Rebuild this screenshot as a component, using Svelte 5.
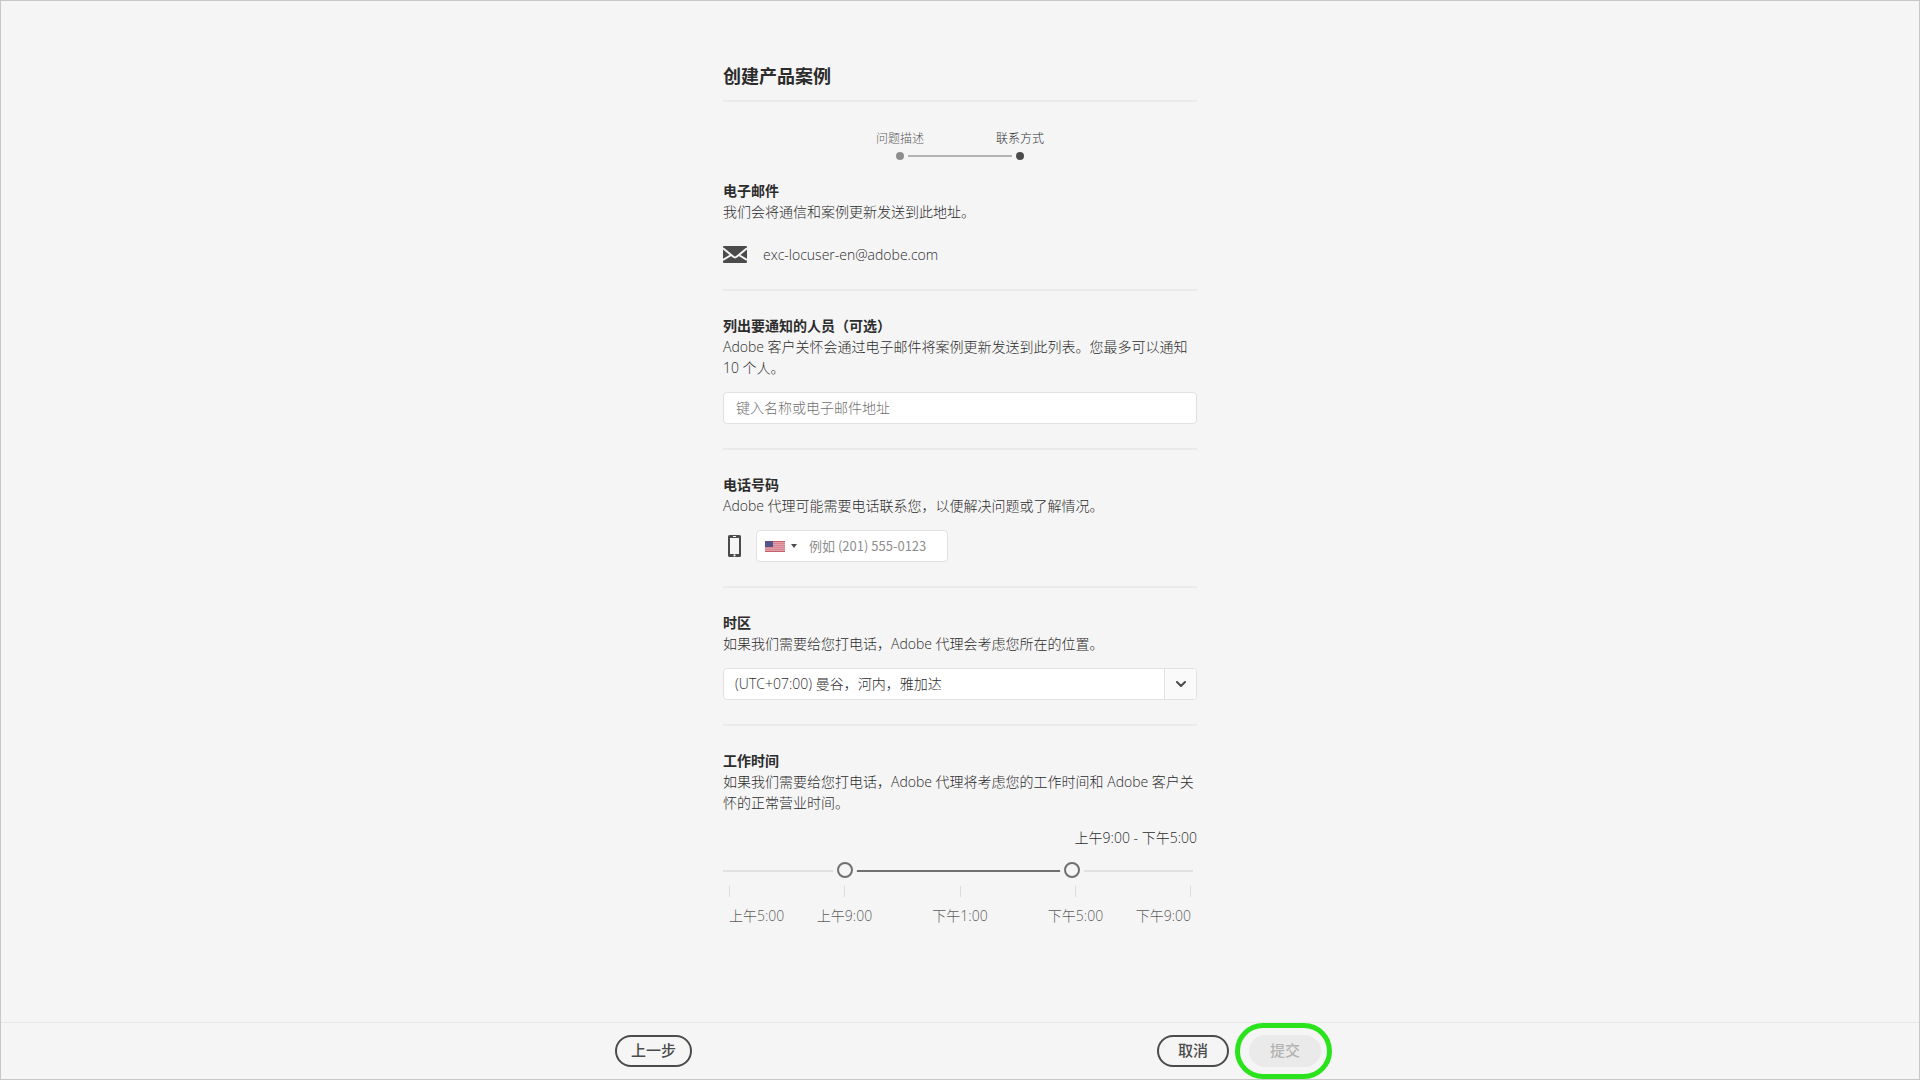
<script>
  const steps = [
    { label: '问题描述', active: false },
    { label: '联系方式', active: true },
  ];
  const hours = ['上午5:00', '上午9:00', '下午1:00', '下午5:00', '下午9:00'];
  const min = 5;
  const max = 21;
  let from = $state(9);
  let to = $state(17);
  let watchers = $state('');
  let phone = $state('');

  const pct = (v) => ((v - min) / (max - min)) * 100;
  const hour = (v) => (v < 12 ? `上午${v}:00` : `下午${v === 12 ? 12 : v - 12}:00`);
</script>

<div class="page">
  <main>
    <h1>创建产品案例</h1>

    <ol class="steps">
      {#each steps as step}
        <li class:active={step.active}>
          <span>{step.label}</span>
          <i class="dot"></i>
        </li>
      {/each}
    </ol>

    <section class="first">
      <h2>电子邮件</h2>
      <p>我们会将通信和案例更新发送到此地址。</p>
      <div class="email">
        <svg width="24" height="17" viewBox="0 0 24 17" aria-hidden="true">
          <rect width="24" height="17" rx="1" fill="#4b4b4b" />
          <path d="M0 2.200 10.400 10.800Q12 12 13.600 10.800L24 2.200M0 14 8.200 9M24 14 15.800 9" fill="none" stroke="#f5f5f5" stroke-width="2" />
        </svg>
        <span>exc-locuser-en@adobe.com</span>
      </div>
    </section>

    <section>
      <h2><label for="watchers">列出要通知的人员（可选）</label></h2>
      <p>Adobe 客户关怀会通过电子邮件将案例更新发送到此列表。您最多可以通知 10 个人。</p>
      <input id="watchers" class="field" type="text" placeholder="键入名称或电子邮件地址" bind:value={watchers} />
    </section>

    <section>
      <h2><label for="phone">电话号码</label></h2>
      <p>Adobe 代理可能需要电话联系您，以便解决问题或了解情况。</p>
      <div class="phone-row">
        <svg width="13" height="22" viewBox="0 0 13 22" aria-hidden="true">
          <path fill-rule="evenodd" fill="#4b4b4b" d="M1.500 0h10A1.500 1.500 0 0 1 13 1.500v19a1.500 1.500 0 0 1-1.500 1.500h-10A1.500 1.500 0 0 1 0 20.500v-19A1.500 1.500 0 0 1 1.500 0ZM2 3v16h9V3ZM5 1v1h3V1ZM6.500 19.300a1.100 1.100 0 1 0 0 2.200 1.100 1.100 0 0 0 0-2.200Z" />
        </svg>
        <div class="field phone">
          <button type="button" class="country" aria-label="美国">
            <svg width="20" height="11" viewBox="0 0 20 11" aria-hidden="true">
              <rect width="20" height="11" fill="#e3a0a8" />
              <path d="M0 .5h20M0 10.500h20" stroke="#c4606c" />
              <path d="M0 2.500h20M0 4.500h20M0 6.500h20M0 8.500h20" stroke="#d88490" />
              <rect width="8" height="6" fill="#55548a" />
            </svg>
            <svg width="6" height="4" viewBox="0 0 6 4" aria-hidden="true"><path d="M0 0h6L3 4Z" fill="#4b4b4b" /></svg>
          </button>
          <input id="phone" type="tel" placeholder="例如 (201) 555-0123" bind:value={phone} />
        </div>
      </div>
    </section>

    <section>
      <h2><label for="zone">时区</label></h2>
      <p>如果我们需要给您打电话，Adobe 代理会考虑您所在的位置。</p>
      <div class="field zone">
        <select id="zone">
          <option>(UTC+07:00) 曼谷，河内，雅加达</option>
        </select>
        <span class="chevron">
          <svg width="10" height="7" viewBox="0 0 10 7" aria-hidden="true"><path d="M1 1 5 5 9 1" fill="none" stroke="#4b4b4b" stroke-width="2" stroke-linecap="round" stroke-linejoin="round" /></svg>
        </span>
      </div>
    </section>

    <section class="last">
      <h2>工作时间</h2>
      <p>如果我们需要给您打电话，Adobe 代理将考虑您的工作时间和 Adobe 客户关怀的正常营业时间。</p>
      <output>{hour(from)} - {hour(to)}</output>
      <div class="slider" style:--from="{pct(from)}%" style:--to="{pct(to)}%">
        <input type="range" aria-label="开始时间" {min} {max} bind:value={from} />
        <input type="range" aria-label="结束时间" {min} {max} bind:value={to} />
      </div>
      <div class="scale">
        {#each hours as h}
          <span>{h}</span>
        {/each}
      </div>
    </section>
  </main>

  <footer>
    <div class="actions">
      <button type="button" class="btn">上一步</button>
      <button type="button" class="btn cancel">取消</button>
      <span class="ring"><button type="button" class="btn submit" disabled>提交</button></span>
    </div>
  </footer>
</div>

<style>
  :global(body) {
    margin: 0;
    background: #f5f5f5;
  }
  .page,
  .page * {
    box-sizing: border-box;
  }
  .page {
    display: flex;
    flex-direction: column;
    min-height: 100vh;
    border: 1px solid #c8c8c8;
    font: 300 14px/21px 'Open Sans', 'Noto Sans CJK SC', sans-serif;
    color: #2c2c2c;
  }
  input,
  select,
  button {
    font: inherit;
    color: inherit;
  }
  main {
    flex: 1;
    width: 100%;
    max-width: 474px;
    margin: 0 auto;
    padding-top: 61px;
  }
  h1 {
    margin: 0;
    padding-bottom: 10px;
    border-bottom: 2px solid #eaeaea;
    font-size: 18px;
    line-height: 28px;
    color: #2c2c2c;
  }
  .steps {
    display: flex;
    justify-content: center;
    margin: 27px 0 0;
    padding: 0;
    list-style: none;
    font-size: 12px;
    line-height: 20px;
    color: #5c5c5c;
  }
  .steps li {
    position: relative;
    display: flex;
    flex-direction: column;
    align-items: center;
    gap: 3px;
    width: 120px;
  }
  .steps li:first-child::after {
    content: '';
    position: absolute;
    left: 68px;
    bottom: 3px;
    width: 104px;
    height: 2px;
    background: #b3b3b3;
  }
  .steps .active {
    color: #2c2c2c;
  }
  .dot {
    width: 8px;
    height: 8px;
    border-radius: 50%;
    background: #8e8e8e;
  }
  .active .dot {
    background: #4b4b4b;
  }
  section {
    padding: 24px 0;
    border-bottom: 2px solid #eaeaea;
  }
  .first {
    padding: 20px 0 17px;
  }
  .last {
    border: 0;
  }
  h2 {
    margin: 0;
    font-size: 14px;
    line-height: 21px;
    color: #2c2c2c;
  }
  p {
    margin: 0 0 14px;
  }
  .email {
    display: flex;
    align-items: center;
    gap: 16px;
    height: 36px;
  }
  .field {
    display: block;
    width: 100%;
    height: 32px;
    padding: 0 12px 2px;
    border: 1px solid #e1e1e1;
    border-radius: 4px;
    background: #fff;
  }
  input::placeholder {
    color: #707070;
    opacity: 1;
  }
  .phone-row {
    display: flex;
    align-items: center;
    gap: 15px;
    padding-left: 5px;
  }
  .phone {
    display: flex;
    width: 192px;
    padding: 0;
  }
  .country {
    display: flex;
    align-items: center;
    gap: 6px;
    padding: 0 12px 0 8px;
    border: 0;
    background: none;
  }
  .phone input {
    flex: 1;
    min-width: 0;
    padding: 0 0 2px;
    border: 0;
    background: none;
    font-family: 'Noto Sans CJK SC', sans-serif;
    font-size: 13px;
    font-weight: 400;
  }
  .phone input::placeholder {
    color: #8e8e8e;
  }
  .zone {
    position: relative;
    padding: 0;
  }
  .zone select {
    width: 100%;
    height: 100%;
    padding: 0 44px 2px 11px;
    border: 0;
    appearance: none;
    background: none;
  }
  .chevron {
    position: absolute;
    inset: 0 0 0 auto;
    display: flex;
    align-items: center;
    justify-content: center;
    width: 32px;
    border-left: 1px solid #e1e1e1;
    border-radius: 0 3px 3px 0;
    background: #fafafa;
    pointer-events: none;
  }
  output {
    display: block;
    text-align: right;
  }
  .slider {
    display: grid;
    align-items: center;
    height: 20px;
    margin: 12px 4px 0 0;
    background:
      linear-gradient(to right, #e1e1e1 var(--from), #707070 var(--from) var(--to), #e1e1e1 var(--to)) 0 10px / 100% 2px no-repeat;
  }
  .slider input {
    grid-area: 1 / 1;
    width: 100%;
    height: 16px;
    margin: 0;
    appearance: none;
    background: none;
    pointer-events: none;
  }
  .slider input::-webkit-slider-thumb {
    appearance: none;
    width: 16px;
    height: 16px;
    border: 2px solid #707070;
    border-radius: 50%;
    background: #f5f5f5;
    box-shadow: 0 0 0 4px #f5f5f5;
    pointer-events: auto;
  }
  .scale {
    display: grid;
    grid-template-columns: 1fr 2fr 2fr 2fr 1fr;
    margin: 6px 6px 0;
    color: #5c5c5c;
  }
  .scale span {
    display: flex;
    flex-direction: column;
    align-items: center;
    gap: 8px;
    white-space: nowrap;
  }
  .scale span::before {
    content: '';
    width: 1px;
    height: 11px;
    background: #dcdcdc;
  }
  .scale span:first-child {
    align-items: flex-start;
  }
  .scale span:last-child {
    align-items: flex-end;
  }
  footer {
    padding-left: 27px;
    border-top: 1px solid #e8e8e8;
  }
  .actions {
    display: flex;
    align-items: center;
    width: 100%;
    max-width: 717px;
    height: 56px;
    margin: 0 auto;
  }
  .btn {
    min-width: 72px;
    height: 32px;
    padding: 0 14px 2px;
    border: 2px solid #4b4b4b;
    border-radius: 16px;
    background: none;
    color: #4b4b4b;
    font-size: 15px;
    font-weight: 500;
    line-height: 20px;
  }
  .cancel {
    margin-left: auto;
  }
  .ring {
    display: flex;
    margin-left: 6px;
    padding: 7px 6px 7px 9px;
    border: 5px solid #2ae31d;
    border-radius: 28px;
  }
  .submit {
    border-color: #eaeaea;
    background: #eaeaea;
    color: #b3b3b3;
  }
</style>
